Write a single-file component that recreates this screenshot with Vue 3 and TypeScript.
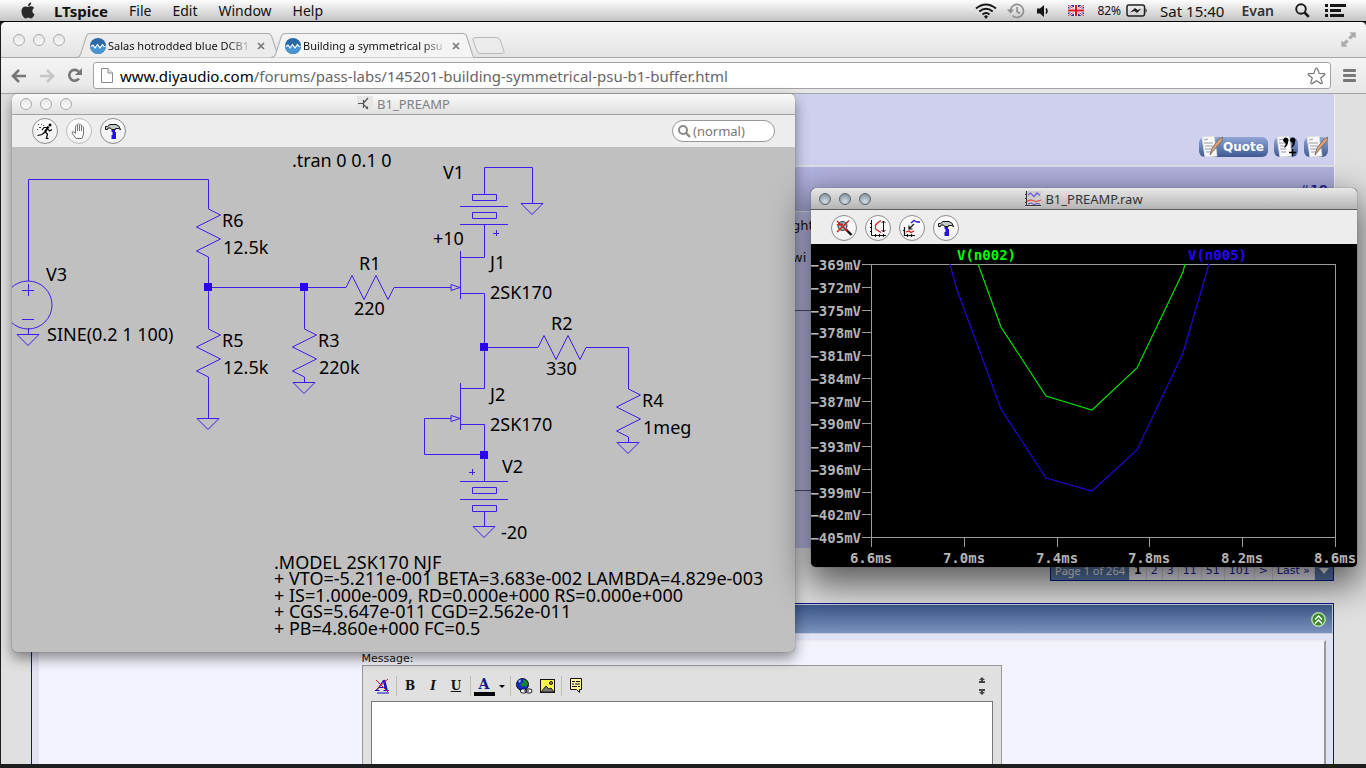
<script setup lang="ts">
import { ref } from 'vue'

interface Label { x: number; y: number; t: string }
interface Tick { pos: number; t: string }

const menus: string[] = ['File', 'Edit', 'Window', 'Help']
const tabs = [
  { title: 'Salas hotrodded blue DCB1', active: false },
  { title: 'Building a symmetrical psu', active: true },
]
const mode = ref('(normal)')
const message = ref('')
const pages: string[] = ['1', '2', '3', '11', '51', '101', '>', 'Last »']

const labels: Label[] = [
  { x: 292, y: 167, t: '.tran 0 0.1 0' },
  { x: 443, y: 179, t: 'V1' },
  { x: 222, y: 227, t: 'R6' },
  { x: 223, y: 254, t: '12.5k' },
  { x: 433, y: 245, t: '+10' },
  { x: 46, y: 281, t: 'V3' },
  { x: 359, y: 270, t: 'R1' },
  { x: 354, y: 315, t: '220' },
  { x: 490, y: 269, t: 'J1' },
  { x: 490, y: 299, t: '2SK170' },
  { x: 47, y: 341, t: 'SINE(0.2 1 100)' },
  { x: 222, y: 347, t: 'R5' },
  { x: 223, y: 374, t: '12.5k' },
  { x: 318, y: 347, t: 'R3' },
  { x: 319, y: 374, t: '220k' },
  { x: 551, y: 330, t: 'R2' },
  { x: 546, y: 375, t: '330' },
  { x: 490, y: 401, t: 'J2' },
  { x: 490, y: 431, t: '2SK170' },
  { x: 642, y: 407, t: 'R4' },
  { x: 643, y: 434, t: '1meg' },
  { x: 502, y: 473, t: 'V2' },
  { x: 501, y: 539, t: '-20' },
  { x: 274, y: 569, t: '.MODEL 2SK170 NJF' },
  { x: 274, y: 585, t: '+ VTO=-5.211e-001 BETA=3.683e-002 LAMBDA=4.829e-003' },
  { x: 274, y: 602, t: '+ IS=1.000e-009, RD=0.000e+000 RS=0.000e+000' },
  { x: 274, y: 618, t: '+ CGS=5.647e-011 CGD=2.562e-011' },
  { x: 274, y: 635, t: '+ PB=4.860e+000 FC=0.5' },
]

const straight: string[] = [
  'M28.5 281V179.5H208.5V209', 'M208.5 257V329', 'M208.5 287.5H346', 'M208.5 377V418.5',
  'M304.5 287V329', 'M304.5 377V382.5', 'M394 287.5H451', 'M28.5 328V334.5',
  'M484.5 194V167.5H532.5V203', 'M472.5 194.5H496.5V200.5H472.5Z', 'M460 206.5H508',
  'M472.5 212.5H496.5V218.5H472.5Z', 'M460 224.5H508', 'M484.5 224V257.5H460', 'M460.5 251V299',
  'M460 293.5H484.5V388.5H460', 'M484 347.5H538', 'M586 347.5H628.5V389', 'M628.5 437V442.5',
  'M460.5 383V430', 'M460 424.5H484.5V481', 'M451 418.5H424.5V454.5H484', 'M460 481.5H508',
  'M472.5 487.5H496.5V493.5H472.5Z', 'M460 499.5H508', 'M472.5 505.5H496.5V511.5H472.5Z',
  'M484.5 511V526', 'M493 233.5H499M496.5 230V236', 'M469 472.5H475M472.5 469V475',
  'M22 290.5H34M28.5 284V296', 'M22 319.5H34',
]
const grounds: [number, number][] = [[28, 334], [208, 418], [304, 382], [532, 203], [628, 442], [484, 526]]
const uprights: [number, number][] = [[208, 209], [208, 329], [304, 329], [628, 389]]
const flats: [number, number][] = [[346, 287], [538, 347]]
const gates: [number, number][] = [[451, 287], [451, 418]]
const nodes: [number, number][] = [[208, 287], [304, 287], [484, 347], [484, 455]]

const volts: Tick[] = Array.from({ length: 13 }, (_, i) => ({
  pos: Math.round(264 + i * 22.75), t: `−${369 + i * 3}mV`,
}))
const times: Tick[] = Array.from({ length: 6 }, (_, i) => ({
  pos: Math.round(871 + i * 92.8), t: `${(6.6 + i * 0.4).toFixed(1)}ms`,
}))
</script>

<template>
  <div class="desktop">
    <header class="menubar">
      <svg class="apple" viewBox="0 0 24 24"><path fill="#2a2a2a" d="M12.152 6.896c-.948 0-2.415-1.078-3.96-1.04-2.04.027-3.91 1.183-4.961 3.014-2.117 3.675-.546 9.103 1.519 12.09 1.013 1.454 2.208 3.09 3.792 3.039 1.52-.065 2.09-.987 3.935-.987 1.831 0 2.35.987 3.96.948 1.637-.026 2.676-1.48 3.676-2.948 1.156-1.688 1.636-3.325 1.662-3.415-.039-.013-3.182-1.221-3.22-4.857-.026-3.04 2.48-4.494 2.597-4.559-1.429-2.09-3.623-2.324-4.39-2.376-2-.156-3.675 1.09-4.61 1.09zM15.53 3.83c.843-1.012 1.4-2.427 1.245-3.83-1.207.052-2.662.805-3.532 1.818-.78.896-1.454 2.338-1.273 3.714 1.338.104 2.715-.688 3.559-1.701" /></svg>
      <nav class="menus">
        <button class="menu app-name">LTspice</button>
        <button v-for="m in menus" :key="m" class="menu">{{ m }}</button>
      </nav>
      <div class="status">
        <svg width="22" height="18" viewBox="0 0 22 18" fill="none" stroke="#161616" stroke-width="2"><path d="M1 6.500Q11-1.500 21 6.500M4.300 9.500Q11 4 17.700 9.500M7.500 12.500Q11 9.500 14.500 12.500" /><path d="M9 14.500L11 13L13 14.500L11 17Z" fill="#161616" stroke="none" /></svg>
        <svg class="s-clock" width="18" height="16" viewBox="0 0 18 16" fill="none" stroke="#8c8c8c" stroke-width="1.600"><path d="M3.500 7A6.500 6.500 0 1 1 5.500 12.700M10 4V8.500L13 10.500" /><path d="M0 6.500H7L3.500 10.500Z" fill="#8c8c8c" stroke="none" /></svg>
        <svg class="s-sound" width="12" height="14" viewBox="0 0 12 14"><path d="M0 4.500H3L7 1V13L3 9.500H0Z" fill="#161616" /><path d="M9 4.500Q11 7 9 9.500" fill="none" stroke="#161616" stroke-width="1.500" /></svg>
        <svg class="s-flag" width="16" height="11" viewBox="0 0 16 11"><path fill="#20308e" d="M0 0H16V11H0Z" /><path d="M0 0L16 11M16 0L0 11" stroke="#fff" stroke-width="2.500" /><path d="M0 0L16 11M16 0L0 11" stroke="#d8223a" stroke-width="1" /><path d="M8 0V11M0 5.500H16" stroke="#fff" stroke-width="4" /><path d="M8 0V11M0 5.500H16" stroke="#e00f24" stroke-width="2" /></svg>
        <span class="s-percent">82%</span>
        <svg class="s-battery" width="22" height="13" viewBox="0 0 22 13"><rect x="1" y="1" width="17.500" height="11" rx="2" fill="none" stroke="#222" stroke-width="1.500" /><path d="M19.500 4Q22 6.500 19.500 9Z" fill="#222" /><path d="M4 8.500L9 4L11.500 6L15.500 4.500L11 9L8.500 7Z" fill="#222" /></svg>
        <span class="s-time">Sat 15:40</span>
        <span class="s-user">Evan</span>
        <svg class="s-search" width="15" height="15" viewBox="0 0 15 15" fill="none" stroke="#1a1a1a"><circle cx="6" cy="6" r="4.800" stroke-width="1.900" /><path d="M9.500 9.500L13.800 13.800" stroke-width="2.600" /></svg>
        <svg class="s-list" width="21" height="13" viewBox="0 0 21 13" fill="#161616"><path d="M0 0H3V3H0ZM0 5H3V8H0ZM0 10H3V13H0ZM5 0H21V3H5ZM5 5H16V8H5ZM5 10H19V13H5Z" /></svg>
      </div>
    </header>

    <section class="browser">
      <div class="tabstrip">
        <div class="lights"><i v-for="n in 3" :key="n"></i></div>
        <div class="tabs">
          <div v-for="t in tabs" :key="t.title" class="tab" :class="{ active: t.active }">
            <svg class="tab-shape" viewBox="0 0 202 25" preserveAspectRatio="none"><path d="M0 24.500C4 24.500 4 22 5 20L10 4Q11 .5 14 .5H190Q193 .5 194 4L199 20Q200 24.500 202 24.500" /></svg>
            <svg class="favicon" width="16" height="16" viewBox="0 0 16 16"><circle cx="8" cy="8" r="8" fill="#2d68a6" /><path d="M0 8H16A8 8 0 0 1 0 8Z" fill="#4794d1" /><path d="M1 8.500L3 7L5 10L7.500 6.500L10 10L12.500 6.500L14 8.500H15.500" fill="none" stroke="#fff" stroke-width="1.200" /></svg>
            <span class="tab-title">{{ t.title }}</span>
            <button class="tab-close" aria-label="Close tab"><svg width="8" height="8" viewBox="0 0 8 8" stroke="#777" stroke-width="1.700"><path d="M1 1L7 7M7 1L1 7" /></svg></button>
          </div>
          <button class="new-tab" aria-label="New tab"><svg width="34" height="18" viewBox="0 0 34 18"><path d="M3 .5H25Q27 .5 28 3L32 14Q32.500 16.500 30.500 16.500H8Q6 16.500 5 14L1 3Q.5 .5 3 .5Z" fill="#ebebeb" stroke="#b9b9b9" /></svg></button>
        </div>
        <svg class="fullscreen" width="15" height="15" viewBox="0 0 15 15" fill="#aaa"><path d="M8 0H15V7L12.500 5L9.500 8L7 5.500L10 2.500ZM7 15H0V8L2.500 10L5.500 7L8 9.500L5 12.500Z" stroke="#f4f4f4" stroke-width=".6" /></svg>
      </div>
      <div class="toolbar">
        <button class="nav-btn" aria-label="Back"><svg width="16" height="14" viewBox="0 0 16 14" fill="none" stroke="#777" stroke-width="2.600"><path d="M15 7H3M8 1L2 7L8 13" /></svg></button>
        <button class="nav-btn" aria-label="Forward"><svg width="16" height="14" viewBox="0 0 16 14" fill="none" stroke="#c6c6c6" stroke-width="2.600"><path d="M1 7H13M8 1L14 7L8 13" /></svg></button>
        <button class="nav-btn" aria-label="Reload"><svg width="16" height="15" viewBox="0 0 16 15"><path d="M12 10.500A5.400 5.400 0 1 1 11.500 3.500" fill="none" stroke="#777" stroke-width="2.600" /><path d="M15 0V7H8Z" fill="#777" /></svg></button>
        <div class="omnibox">
          <svg width="12" height="15" viewBox="0 0 12 15"><path d="M.5 .5H7L11.500 5V14.500H.5Z" fill="#fff" stroke="#8b8b8b" /><path d="M7 .5V5H11.500" fill="#eee" stroke="#8b8b8b" /></svg>
          <a class="url" href="#"><b>www.diyaudio.com</b>/forums/pass-labs/145201-building-symmetrical-psu-b1-buffer.html</a>
          <svg class="star" width="19" height="18" viewBox="0 0 19 18"><path d="M9.500 1Q10.300 1 10.600 2L12.200 6.500L17 6.600Q18.500 6.900 17.500 8L13.700 10.900L15.200 15.500Q15.300 17.200 14 16.600L9.500 13.700L5 16.600Q3.700 17.200 3.800 15.500L5.300 10.900L1.500 8Q.5 6.900 2 6.600L6.800 6.500L8.400 2Q8.700 1 9.500 1Z" fill="#fff" stroke="#777" stroke-width="1.200" /></svg>
        </div>
        <button class="nav-btn wrench" aria-label="Menu"><svg width="13" height="13" viewBox="0 0 13 13" fill="#777"><rect width="13" height="3" rx="1" /><rect y="5" width="13" height="3" rx="1" /><rect y="10" width="13" height="3" rx="1" /></svg></button>
      </div>

      <main class="page">
        <div class="post-tools">
          <button class="quote-btn"><svg width="24" height="22" viewBox="0 0 24 22"><path d="M3 1L15 0L18 20L6 21Z" fill="#fafafa" stroke="#ddd" /><path d="M5 4L9 3M5 7H14M6 10H14M6 13H12M7 16H12" stroke="#99a" /><path d="M11 19L13 12L20 3L24 1L23 5L15 14Z" fill="#d9a27c" stroke="#60534c" stroke-width=".7" /></svg>Quote</button>
          <button class="mini-btn" aria-label="Multi-quote"><svg width="24" height="22" viewBox="0 0 24 22"><path d="M3 1L15 0L18 20L6 21Z" fill="#fafafa" stroke="#ddd" /><path d="M5 4L9 3M5 7H12M6 10H12M6 13H12M7 16H12" stroke="#99a" /><path d="M9 4a2.800 2.800 0 1 1 5 2q0 4-4 6q2-3 1.500-5Q9 6 9 4ZM16 4a2.800 2.800 0 1 1 5 2q0 4-4 6q2-3 1.500-5Q16 6 16 4Z" /><path d="M15 16.500H22M18.500 13V20" stroke="#000" stroke-width="1.500" /></svg></button>
          <button class="mini-btn" aria-label="Reply"><svg width="24" height="22" viewBox="0 0 24 22"><path d="M3 1L15 0L18 20L6 21Z" fill="#fafafa" stroke="#ddd" /><path d="M5 4L9 3M5 7H14M6 10H14M6 13H12M7 16H12" stroke="#99a" /><path d="M11 19L13 12L20 3L24 1L23 5L15 14Z" fill="#d9a27c" stroke="#60534c" stroke-width=".7" /></svg></button>
        </div>
        <div class="post-head"><a href="#">#<b>19</b></a></div>
        <div class="post-body">
          <p>ght</p>
          <p>wi</p>
        </div>
        <nav class="pager">
          <span class="pager-head">Page 1 of 264</span>
          <a v-for="p in pages" :key="p" href="#" :class="{ current: p === '1' }">{{ p }}</a>
          <button class="pager-head" aria-label="Go to page"><svg width="10" height="6" viewBox="0 0 10 6"><path d="M0 0H10L5 6Z" fill="#fff" /></svg></button>
        </nav>
        <section class="reply">
          <div class="reply-head">
            <button aria-label="Collapse"><svg width="15" height="15" viewBox="0 0 15 15"><circle cx="7.500" cy="7.500" r="6.700" fill="#3c8a2c" stroke="#b9dcae" stroke-width="1.500" /><path d="M4 7.500L7.500 4L11 7.500M4 11.500L7.500 8L11 11.500" fill="none" stroke="#fff" stroke-width="1.500" /></svg></button>
          </div>
          <div class="reply-body">
            <div class="reply-inner">
              <div class="editor-col">
                <label for="msg">Message:</label>
                <div class="editor">
                  <div class="editor-bar">
                    <button aria-label="Remove formatting"><svg width="16" height="16" viewBox="0 0 16 16" fill="none"><path d="M3 12L9.500 2.500M5 9.500H12M1 12.500H5.500M9.500 12.500H15M3 15H15" stroke="#1111c8" stroke-width="1.200" /><path d="M10 2L12.500 12.500" stroke="#1111c8" stroke-width="2.600" /><path d="M2 2L14 14M14 1L2 12" stroke="#d3202c" /></svg></button>
                    <i class="sep"></i>
                    <button class="fmt">B</button>
                    <button class="fmt i">I</button>
                    <button class="fmt u">U</button>
                    <i class="sep"></i>
                    <button class="fmt color"><span>A</span></button>
                    <button class="drop" aria-label="Font color"><svg width="6" height="3" viewBox="0 0 6 3"><path d="M0 0H6L3 3Z" /></svg></button>
                    <i class="sep"></i>
                    <button aria-label="Insert link"><svg width="17" height="16" viewBox="0 0 17 16"><circle cx="6.500" cy="6.500" r="6" fill="#1427c9" stroke="#111" /><path d="M7 1.500L11 3L12 6L10 9L8 8L6 9L4 6L7 5Z" fill="#12872c" /><path d="M2 3L5 1.500L4 5Z" fill="#9fd3ff" /><rect x="4.500" y="11" width="6" height="4" rx="2" fill="#fff" stroke="#111" /><rect x="10" y="11" width="6" height="4" rx="2" fill="#fff" stroke="#111" /><path d="M8 13H13" stroke="#111" /></svg></button>
                    <button aria-label="Insert image"><svg width="15" height="14" viewBox="0 0 15 14"><rect x=".5" y=".5" width="14" height="13" fill="#fbf64b" stroke="#111" /><circle cx="11" cy="4" r="1.500" fill="#b79b10" stroke="#111" /><path d="M1 13L6 7L9 10L11 9L14 13Z" fill="#777" stroke="#222" /></svg></button>
                    <i class="sep"></i>
                    <button class="note" aria-label="Insert quote"><svg width="14" height="16" viewBox="0 0 14 16"><path d="M1.500 .5H12.500V11.500H10.500V14.500L7.500 11.500H1.500Z" fill="#fdf99a" stroke="#111" /><path d="M3 3.500H6M7 3.500H11M3 6H5M6 6H11M3 8.500H8M9 8.500H11" stroke="#111" /></svg></button>
                    <span class="sizer">
                      <button aria-label="Smaller"><svg width="6" height="6" viewBox="0 0 6 6" fill="#444"><path d="M3 0L6 3H4V4H6V6H0V4H2V3H0Z" /></svg></button>
                      <button aria-label="Larger"><svg width="6" height="6" viewBox="0 0 6 6" fill="#444"><path d="M3 6L6 3H4V2H6V0H0V2H2V3H0Z" /></svg></button>
                    </span>
                  </div>
                  <textarea id="msg" v-model="message"></textarea>
                </div>
              </div>
            </div>
          </div>
        </section>
      </main>
    </section>

    <section class="window schematic">
      <div class="titlebar">
        <div class="lights"><i v-for="n in 3" :key="n"></i></div>
        <h2><svg width="16" height="16" viewBox="0 0 16 16" fill="none" stroke="#555"><path fill="#e6e6e6" stroke="none" d="M0 0H16V16H0Z" /><path d="M1 7.500H6M6.500 4V12M7 6.500L11 2M7 9L11 13" stroke-width="1.200" /><path d="M8.500 12.500H11V10Z" fill="#555" stroke="none" /></svg>B1_PREAMP</h2>
      </div>
      <div class="tools">
        <button class="round" aria-label="Run"><svg width="18" height="18" viewBox="0 0 18 18"><circle cx="14" cy="3" r="1.500" /><path d="M12.500 4.500L9 10" stroke="#000" stroke-width="2.200" /><path d="M12 5.500H8L6 8M12 7L13.500 9L16 7.500M9 10L11.500 12L10.500 16.500H12.500M9 10L6 12.500L1.500 13.500" fill="none" stroke="#000" stroke-width="1.200" /><path d="M2 2.500H3M5 2.500H6M3 5.500H5M1 7.500H2M7 3.500H8" stroke="#444" /></svg></button>
        <button class="round off" aria-label="Halt"><svg width="18" height="18" viewBox="0 0 18 18" fill="#fafafa" stroke="#777"><path d="M6 16.500L2 11Q2 9 4 10L5.500 11.500V4Q6.500 2.500 7.500 4V8V2.500Q8.500 1 9.500 2.500V8V3Q10.500 1.500 11.500 3V8.500V5Q12.500 3.500 13.500 5V12L12 16.500Z" /><path d="M7.500 8V9M9.500 8V9M11.500 8V9" /></svg></button>
        <button class="round" aria-label="Control panel"><svg width="18" height="18" viewBox="0 0 18 18"><path d="M1.500 7.500V4.500H3.500L6 2.500H12Q16 3.500 16.500 8L15 6.500H11.500V7.500H7.500L6.500 6H4L3.500 7.500Z" fill="#c4cac4" stroke="#111" /><path d="M7.500 8H11V10H12V17H7.500V13H8.500V10H7.500Z" fill="#2410e0" /></svg></button>
        <label class="search"><svg width="13" height="13" viewBox="0 0 13 13" fill="none" stroke="#8a8a8a" stroke-width="2"><circle cx="5" cy="5" r="4" /><path d="M8 8L12 12" stroke-width="2.400" /></svg><input v-model="mode" type="text" aria-label="Search" /></label>
      </div>
      <svg class="canvas" viewBox="12 147 783 505" preserveAspectRatio="xMinYMin slice">
        <g fill="none" stroke="#3d1eea">
          <path v-for="d in straight" :key="d" :d="d" />
          <circle cx="28" cy="305" r="24" />
          <path v-for="g in grounds" :key="'g' + g" :d="`M${g[0] - 11} ${g[1] + 0.5}h22l-11 11z`" />
          <path v-for="r in uprights" :key="'u' + r" :d="`M${r[0] + 0.5} ${r[1]}l12 6l-24 12l24 12l-24 12l12 6`" />
          <path v-for="r in flats" :key="'f' + r" :d="`M${r[0]} ${r[1] + 0.5}l6 -12l12 24l12 -24l12 24l6 -12`" />
          <path v-for="a in gates" :key="'a' + a" :d="`M${a[0]} ${a[1] - 2.500}v6l9 -3z`" />
        </g>
        <rect v-for="n in nodes" :key="'n' + n" :x="n[0] - 4" :y="n[1] - 4" width="8" height="8" fill="#2c00f4" />
        <text v-for="(l, i) in labels" :key="i" :x="l.x" :y="l.y">{{ l.t }}</text>
      </svg>
    </section>

    <section class="window plot">
      <div class="titlebar">
        <div class="lights"><i v-for="n in 3" :key="n"></i></div>
        <h2><svg width="16" height="16" viewBox="0 0 16 16" fill="none"><path fill="#ccc" d="M0 0H16V16H0Z" /><path d="M1.500 0V15M0 14.500H16M0 3.500H2M0 7.500H2M0 11.500H2" stroke="#333" /><path d="M3 4L5.500 2L9 5.500L12 2L15 4.500" stroke="#6a5de0" stroke-width="1.300" /><path d="M2 10L6 9L11 10.500L16 9" stroke="#e8534c" stroke-width="1.300" /><path d="M3 13L6 12L9 13.500L12 12.500L15 13" stroke="#5348c0" /></svg>B1_PREAMP.raw</h2>
      </div>
      <div class="tools">
        <button class="round" aria-label="Zoom full"><svg width="18" height="18" viewBox="0 0 18 18"><circle cx="7.500" cy="7" r="4.500" fill="#6fc9d6" stroke="#333" /><path d="M11 10.500L16.500 16" stroke="#111" stroke-width="2.400" /><path d="M2 2L12.500 12.500M14 1.500L2 13M2 6L8 5" stroke="#e01616" stroke-width="1.400" /></svg></button>
        <button class="round" aria-label="Autorange"><svg width="18" height="18" viewBox="0 0 18 18" fill="none" stroke="#111"><path d="M2.500 1V16.500H17M1 4.500H3M1 8.500H3M1 12.500H3M6.500 15V18M10.500 15V18M14.500 15V18M14.500 2V13M12.500 4L14.500 2L16.500 4M12.500 11L14.500 13L16.500 11" /><path d="M6.500 10V6L9 3.500L12 1.500M6.500 10L9.500 12L12 13.500" stroke="#e01616" stroke-width="1.200" /></svg></button>
        <button class="round" aria-label="Pick trace"><svg width="18" height="18" viewBox="0 0 18 18" fill="none" stroke="#111"><path d="M1.500 8V16.500H12M0 11.500H2M4.500 15V18M8.500 15V18M11 5L6 10M6 6.500V10H9.500" stroke-width="1.200" /><path d="M8 4L11 1.500L14 3H17" stroke="#2410e0" stroke-width="1.300" /><path d="M3 13L6 12L8 13.500L11 12" stroke="#e01616" stroke-width="1.300" /></svg></button>
        <button class="round" aria-label="Control panel"><svg width="18" height="18" viewBox="0 0 18 18"><path d="M1.500 7.500V4.500H3.500L6 2.500H12Q16 3.500 16.500 8L15 6.500H11.500V7.500H7.500L6.500 6H4L3.500 7.500Z" fill="#c4cac4" stroke="#111" /><path d="M7.500 8H11V10H12V17H7.500V13H8.500V10H7.500Z" fill="#2410e0" /></svg></button>
      </div>
      <svg class="canvas" viewBox="811 244 546 323">
        <g fill="none" stroke="#9c9c9c">
          <path d="M871.5 264V547M1335.5 264V547M871 264.500H1336M871 537.500H1336" />
          <path v-for="v in volts" :key="v.t" :d="`M862 ${v.pos + 0.5}H871`" />
          <path v-for="t in times" :key="t.t" :d="`M${t.pos + 0.5} 537V547`" />
        </g>
        <polyline points="978,264 1001,327 1046,396 1092,410 1137,368 1183,272 1185,264" fill="none" stroke="#00e000" stroke-width="1.200" />
        <polyline points="950,264 956,287 1001,409 1046,478 1092,491 1137,450 1183,353 1209,264" fill="none" stroke="#2400d8" stroke-width="1.200" />
        <text v-for="v in volts" :key="v.t" x="861" :y="v.pos + 6" text-anchor="end" fill="#b4b4b4">{{ v.t }}</text>
        <text v-for="t in times" :key="t.t" :x="t.pos" y="563" text-anchor="middle" fill="#b4b4b4">{{ t.t }}</text>
        <text x="957" y="260" fill="#00ff00">V(n002)</text>
        <text x="1188" y="260" fill="#2800ff">V(n005)</text>
      </svg>
    </section>
  </div>
</template>

<style>
body { margin: 0; background: #1c1e1f; }
</style>

<style scoped>
* { box-sizing: border-box; }
button { font: inherit; color: inherit; background: none; border: 0; padding: 0; margin: 0; }
svg { display: block; flex: none; }
h2, p { margin: 0; }
.desktop {
  position: relative;
  display: flex;
  flex-direction: column;
  height: 100vh;
  padding: 0 0 4px 1px;
  overflow: hidden;
  background: #1c1e1f;
  font-family: "Noto Sans", "DejaVu Sans", sans-serif;
  color: #111;
}
.menubar {
  display: flex;
  align-items: center;
  flex: none;
  height: 22px;
  margin-left: -1px;
  padding: 0 20px;
  border-bottom: 1px solid #000;
  background: linear-gradient(#fcfcfc, #c4c4c4);
  font-size: 14px;
  line-height: 20px;
}
.apple { width: 16px; height: 17px; }
.menus { display: flex; gap: 21px; margin-left: 18px; }
.app-name { font-size: 15px; font-weight: 700; }
.status { display: flex; align-items: center; margin-left: auto; }
.s-clock { margin-left: 10px; }
.s-sound { margin-left: 12px; }
.s-flag { margin-left: 19px; }
.s-percent { margin-left: 13px; font-size: 12px; }
.s-battery { margin-left: 5px; }
.s-time { margin-left: 12px; font-size: 15px; }
.s-user { margin-left: 17px; font-weight: 600; color: #333; }
.s-search { margin-left: 21px; }
.s-list { margin-left: 15px; }

.browser {
  display: flex;
  flex-direction: column;
  flex: 1;
  min-height: 0;
  overflow: hidden;
  border-radius: 5px 5px 0 0;
  background: #e0e0e0;
}
.lights { display: flex; gap: 8px; }
.lights i {
  width: 12px;
  height: 12px;
  border: 1px solid #aaa;
  border-radius: 50%;
  background: linear-gradient(#e6e6e6, #fafafa);
}
.tabstrip {
  display: flex;
  align-items: flex-end;
  flex: none;
  height: 36px;
  border-bottom: 1px solid #a8a8a8;
  background: linear-gradient(#f8f8f8, #e3e3e3);
}
.tabstrip .lights { align-self: center; padding-left: 12px; }
.tabs { display: flex; align-items: flex-end; margin-left: 11px; margin-bottom: -1px; }
.tab {
  position: relative;
  display: flex;
  align-items: center;
  width: 204px;
  height: 25px;
  padding: 0 9px 0 14px;
  font-size: 11px;
}
.tab + .tab { margin-left: -9px; }
.tab-shape { position: absolute; left: 0; top: 0; width: 100%; height: 100%; }
.tab-shape path { fill: #ececec; stroke: #adadad; }
.tab.active .tab-shape path { fill: #f4f4f4; }
.favicon, .tab-title, .tab-close { position: relative; }
.tab-title {
  flex: 1;
  margin-left: 2px;
  overflow: hidden;
  white-space: nowrap;
  -webkit-mask-image: linear-gradient(90deg, #000 82%, transparent);
  mask-image: linear-gradient(90deg, #000 82%, transparent);
}
.tab-close { margin: 0 6px 0 4px; }
.new-tab { margin: 0 0 3px -3px; }
.fullscreen { align-self: center; margin: 0 10px 0 auto; }
.toolbar {
  display: flex;
  align-items: center;
  flex: none;
  height: 36px;
  padding: 0 10px;
  border-bottom: 1px solid #a4a4a4;
  background: linear-gradient(#f4f4f4, #e6e6e6);
}
.nav-btn { margin-right: 12px; }
.omnibox {
  display: flex;
  align-items: center;
  flex: 1;
  height: 27px;
  margin-left: -2px;
  padding: 0 4px 0 7px;
  border: 1px solid #a2a2a2;
  border-radius: 3px;
  background: #fff;
}
.url { margin-left: 7px; font-size: 15px; color: #666; text-decoration: none; white-space: nowrap; }
.url b { font-weight: 400; color: #000; }
.star { margin-left: auto; }
.wrench { margin: 0 0 0 12px; }

.page { flex: 1; min-height: 0; margin: 0 31px 0 30px; overflow: hidden; font-family: "DejaVu Sans", sans-serif; }
.post-tools {
  display: flex;
  align-items: flex-end;
  justify-content: flex-end;
  gap: 6px;
  height: 71px;
  padding: 0 6px 8px 0;
  background: #cfd0ee;
  border-right: 1px solid #f2f2f2;
}
.quote-btn, .mini-btn { display: flex; align-items: center; height: 20px; border-radius: 6px; background: linear-gradient(#8fa6d6, #3f5a92); }
.quote-btn { width: 69px; font-size: 12px; font-weight: 700; color: #fff; }
.mini-btn { width: 24px; }
.post-head {
  display: flex;
  align-items: center;
  justify-content: flex-end;
  height: 46px;
  padding-right: 6px;
  border-top: 2px solid #dedee8;
  border-right: 1px solid #f2f2f2;
  background: linear-gradient(#b3b3e0, #a4a4d0);
  font-size: 13px;
}
.post-head a { color: #22229c; text-decoration: none; }
.post-body {
  height: 337px;
  padding: 6px 0 0 761px;
  border-top: 1px solid #d8d8e4;
  border-right: 1px solid #f2f2f2;
  background: linear-gradient(#50506a, #50506a) 0 98px / 100% 1px no-repeat, linear-gradient(#50506a, #50506a) 0 278px / 100% 1px no-repeat, #babae2;
  font-size: 13px;
  line-height: 16px;
}
.post-body p + p { margin-top: 16px; }
.pager {
  display: flex;
  gap: 1px;
  width: max-content;
  height: 20px;
  margin: 13px 1px 0 auto;
  border: 1px solid #0b198c;
  background: #d8d8e0;
  font-size: 11px;
  line-height: 18px;
}
.pager a { padding: 0 4px; color: #22229c; text-decoration: none; background: #f2f2fc; }
.pager a.current { color: #000; font-weight: 700; }
.pager-head { display: flex; align-items: center; padding: 0 4px; font-family: "Noto Sans", sans-serif; color: #fff; background: #5c7cae; }
.reply { margin: 22px 1px 0 0; border: 1px solid #0b198c; background: #e1e2f3; }
.reply-head {
  display: flex;
  align-items: center;
  justify-content: flex-end;
  height: 30px;
  padding-right: 6px;
  border: 1px solid #c9c9de;
  background: linear-gradient(#3d5a8c, #7a92bc);
}
.reply-body { padding: 6px 7px; }
.reply-inner {
  height: 300px;
  padding-top: 11px;
  border-top: 2px solid #ececf2;
  border-right: 2px solid #999;
  background: #f3f3fe;
}
.editor-col { width: 640px; max-width: 100%; margin: 0 auto; font-size: 11px; line-height: 12px; }
.editor-col label { display: block; }
.editor { padding: 1px 8px 8px; border: 1px solid #999; background: #e0e0e0; }
.editor-bar { display: flex; align-items: center; height: 34px; padding-top: 4px; }
.editor-bar > button { display: flex; align-items: center; justify-content: center; width: 23px; height: 22px; }
.sep { width: 1px; height: 20px; margin: 0 2px; background: #bdbdac; }
.editor-bar .fmt { font: 700 12px/20px "DejaVu Serif", "Liberation Serif", serif; }
.editor-bar .i { font-style: italic; }
.editor-bar .u { text-decoration: underline; }
.editor-bar .color { font-size: 14px; }
.fmt.color span { width: 21px; line-height: 15px; border-bottom: 4px solid #000; color: #14148c; }
.editor-bar .drop { width: 12px; }
.editor-bar .note { width: 24px; }
.sizer { display: flex; flex-direction: column; gap: 6px; margin: 0 8px 0 auto; }
textarea {
  display: block;
  width: 100%;
  height: 200px;
  border: 1px solid #777;
  border-radius: 0;
  background: #fff;
  resize: none;
}

.window { position: absolute; border-radius: 5px; }
.titlebar {
  position: relative;
  display: flex;
  align-items: center;
  justify-content: center;
  height: 21px;
  border-bottom: 1px solid #a0a0a0;
  border-radius: 5px 5px 0 0;
  background: linear-gradient(#fafafa, #e0e0e0);
}
.titlebar .lights { position: absolute; left: 8px; }
.titlebar h2 { display: flex; align-items: center; gap: 4px; font-size: 13px; line-height: 18px; font-weight: 400; color: #808080; }
.tools { display: flex; align-items: center; gap: 8px; height: 32px; padding: 0 20px; background: #ededed; }
.round {
  display: flex;
  align-items: center;
  justify-content: center;
  width: 26px;
  height: 26px;
  border: 1px solid #8c8c8c;
  border-radius: 50%;
  background: linear-gradient(#fff, #f0f0f0);
}
.round.off { border-color: #bbb; }
.search {
  display: flex;
  align-items: center;
  width: 103px;
  height: 22px;
  margin-left: auto;
  padding: 0 5px;
  border: 1px solid #999;
  border-radius: 11px;
  background: #fff;
}
.search input {
  width: 100%;
  min-width: 0;
  padding: 0 0 0 2px;
  border: 0;
  background: none;
  font: 13px/18px "Noto Sans", sans-serif;
  color: #777;
}
.canvas { width: 100%; }
.schematic {
  left: 12px;
  right: 571px;
  top: 94px;
  background: #c0c0c0;
  box-shadow: 0 0 1px #555, 0 6px 14px rgba(0, 0, 0, .45);
}
.schematic .canvas { height: 505px; border-radius: 0 0 5px 5px; }
.schematic text { font: 18px "Noto Sans", sans-serif; fill: #000; }
.plot {
  left: 811px;
  right: 9px;
  top: 188px;
  background: #000;
  box-shadow: 0 0 1px #333, 0 14px 36px 4px rgba(0, 0, 0, .6);
}
.plot .titlebar { height: 22px; border-color: #5c5c5c; background: linear-gradient(#e8e8e8, #b4b4b4); }
.plot .titlebar h2 { color: #333; }
.plot .lights i { border-color: #5b6670; background: radial-gradient(circle at 50% 75%, #d3dde6, #76848f); }
.plot .tools { height: 34px; padding-top: 2px; }
.plot .canvas { border-radius: 0 0 5px 5px; }
.plot text { font: 700 14px "DejaVu Sans Mono", monospace; }
</style>
